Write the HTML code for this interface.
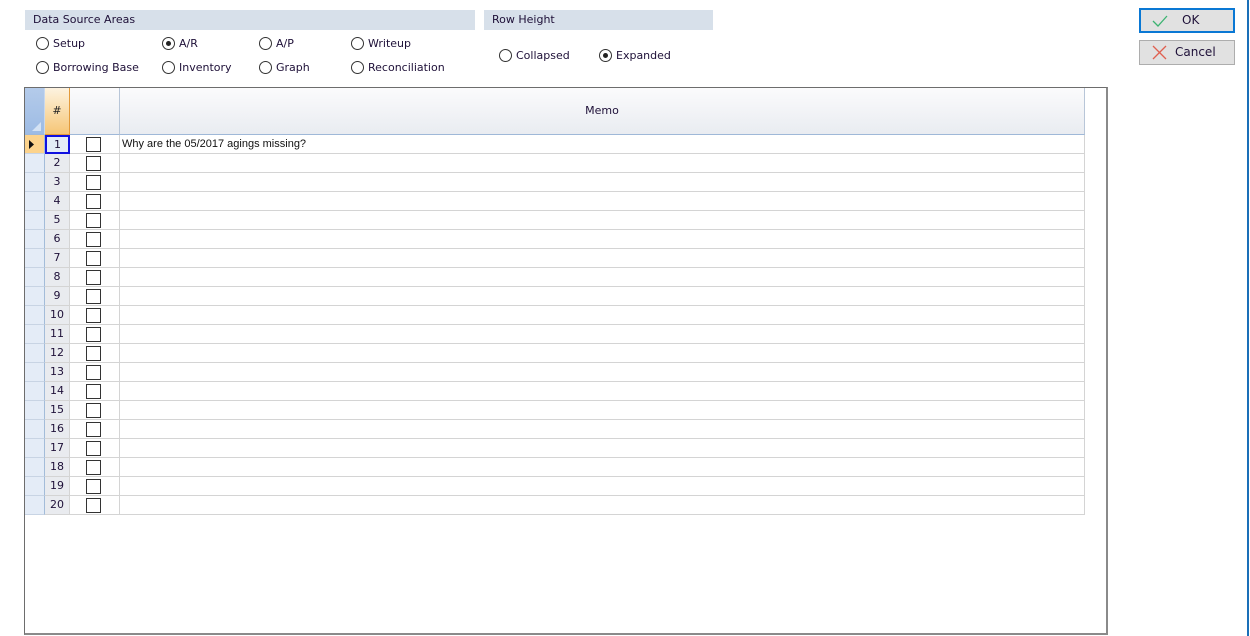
<!DOCTYPE html>
<html><head><meta charset="utf-8"><style>
*{margin:0;padding:0;box-sizing:border-box}
body{width:1250px;height:636px;background:#fff;position:relative;overflow:hidden;font-family:"DejaVu Sans","Liberation Sans",sans-serif;font-size:11px;color:#1e1038}
.a{position:absolute}
.band{position:absolute;background:#d7e0ea;height:20px;top:10px;padding-left:8px;line-height:20px}
.rb{position:absolute;width:13px;height:13px;border:1px solid #333;border-radius:50%;background:#fff}
.rb.on::after{content:"";position:absolute;left:3px;top:3px;width:5px;height:5px;border-radius:50%;background:#222}
.lbl{position:absolute;line-height:13px}
.btn{position:absolute;left:1139px;width:96px;height:25px;background:#e1e1e1;border:1px solid #adadad;font-size:12px;line-height:23px}
.grid{position:absolute;left:24px;top:87px;width:1084px;height:548px;border:1px solid #6d6d6d;border-right:2px solid #8a8a8a;border-bottom:2px solid #8a8a8a;background:#fff}
.row{position:absolute;left:0;height:19px;width:1060px}
.c{position:absolute;top:0;height:19px;border-right:1px solid #d4d4d4;border-bottom:1px solid #d4d4d4}
.s{left:0;width:20px;background:#e4ecf7;border-right:1px solid #a3bcd9;border-bottom:1px solid #c8d4e4}
.n{left:20px;width:25px;background:#e9ebef;text-align:center;line-height:18px}
.k{left:45px;width:50px}
.k::after{content:"";position:absolute;left:16px;top:2px;width:13px;height:13px;border:1px solid #333;background:#fff}
.m{left:95px;width:965px;font-family:"Liberation Sans",sans-serif;font-size:11px;line-height:18px;padding-left:2px;color:#111}
</style></head><body>
<div class="band" style="left:25px;width:450px">Data Source Areas</div>
<div class="band" style="left:484px;width:229px">Row Height</div>

<div class="rb" style="left:36px;top:37px"></div><div class="lbl" style="left:53px;top:37px">Setup</div>
<div class="rb on" style="left:162px;top:37px"></div><div class="lbl" style="left:179px;top:37px">A/R</div>
<div class="rb" style="left:259px;top:37px"></div><div class="lbl" style="left:276px;top:37px">A/P</div>
<div class="rb" style="left:351px;top:37px"></div><div class="lbl" style="left:368px;top:37px">Writeup</div>
<div class="rb" style="left:36px;top:61px"></div><div class="lbl" style="left:53px;top:61px">Borrowing Base</div>
<div class="rb" style="left:162px;top:61px"></div><div class="lbl" style="left:179px;top:61px">Inventory</div>
<div class="rb" style="left:259px;top:61px"></div><div class="lbl" style="left:276px;top:61px">Graph</div>
<div class="rb" style="left:351px;top:61px"></div><div class="lbl" style="left:368px;top:61px">Reconciliation</div>
<div class="rb" style="left:499px;top:49px"></div><div class="lbl" style="left:516px;top:49px">Collapsed</div>
<div class="rb on" style="left:599px;top:49px"></div><div class="lbl" style="left:616px;top:49px">Expanded</div>

<div class="btn" style="top:8px;border:2px solid #0a78d4;line-height:21px">
<svg class="a" style="left:11px;top:5px" width="16" height="12"><path d="M1 6 L6 11 L15 1" stroke="#3cb371" stroke-width="1.3" fill="none"/></svg>
<span class="a" style="left:41px;top:0">OK</span></div>
<div class="btn" style="top:40px">
<svg class="a" style="left:12px;top:4px" width="15" height="15"><path d="M1 1 L14 14 M14 1 L1 14" stroke="#e06050" stroke-width="1.3"/></svg>
<span class="a" style="left:35px;top:0">Cancel</span></div>

<div class="a" style="left:1247px;top:0;width:2px;height:636px;background:#1a6fb8"></div>

<div class="grid">
 <div class="a" style="left:0;top:0;width:20px;height:47px;background:linear-gradient(#b4cbea,#9dbbe4);border-right:1px solid #c8d8ee;border-bottom:1px solid #9fb8d8"><div class="a" style="right:3px;bottom:3px;width:0;height:0;border-left:9px solid transparent;border-bottom:9px solid #d4e2f4"></div></div>
 <div class="a" style="left:20px;top:0;width:25px;height:47px;background:linear-gradient(#fdf3e0,#f6c676);border-right:1px solid #e39a3a;border-bottom:1px solid #e39a3a;text-align:center;line-height:46px;color:#222">#</div>
 <div class="a" style="left:45px;top:0;width:50px;height:47px;background:linear-gradient(#fbfbfc,#e9ecf1);border-right:1px solid #b8c6d8;border-bottom:1px solid #9fb8d8"></div>
 <div class="a" style="left:95px;top:0;width:965px;height:47px;background:linear-gradient(#fbfbfc,#e9ecf1);border-right:1px solid #b8c6d8;border-bottom:1px solid #9fb8d8;text-align:center;line-height:46px">Memo</div>

 <div class="row" style="top:47px"><div class="c s" style="background:#fcd38c"><svg class="a" style="left:4px;top:5px" width="5" height="9"><path d="M0 0 L5 4.5 L0 9Z" fill="#111"/></svg></div><div class="c n" style="border:2px solid #1010e0;background:#e4ecf7;line-height:15px">1</div><div class="c k"></div><div class="c m">Why are the 05/2017 agings missing?</div></div>
 <div class="row" style="top:66px"><div class="c s"></div><div class="c n">2</div><div class="c k"></div><div class="c m"></div></div>
 <div class="row" style="top:85px"><div class="c s"></div><div class="c n">3</div><div class="c k"></div><div class="c m"></div></div>
 <div class="row" style="top:104px"><div class="c s"></div><div class="c n">4</div><div class="c k"></div><div class="c m"></div></div>
 <div class="row" style="top:123px"><div class="c s"></div><div class="c n">5</div><div class="c k"></div><div class="c m"></div></div>
 <div class="row" style="top:142px"><div class="c s"></div><div class="c n">6</div><div class="c k"></div><div class="c m"></div></div>
 <div class="row" style="top:161px"><div class="c s"></div><div class="c n">7</div><div class="c k"></div><div class="c m"></div></div>
 <div class="row" style="top:180px"><div class="c s"></div><div class="c n">8</div><div class="c k"></div><div class="c m"></div></div>
 <div class="row" style="top:199px"><div class="c s"></div><div class="c n">9</div><div class="c k"></div><div class="c m"></div></div>
 <div class="row" style="top:218px"><div class="c s"></div><div class="c n">10</div><div class="c k"></div><div class="c m"></div></div>
 <div class="row" style="top:237px"><div class="c s"></div><div class="c n">11</div><div class="c k"></div><div class="c m"></div></div>
 <div class="row" style="top:256px"><div class="c s"></div><div class="c n">12</div><div class="c k"></div><div class="c m"></div></div>
 <div class="row" style="top:275px"><div class="c s"></div><div class="c n">13</div><div class="c k"></div><div class="c m"></div></div>
 <div class="row" style="top:294px"><div class="c s"></div><div class="c n">14</div><div class="c k"></div><div class="c m"></div></div>
 <div class="row" style="top:313px"><div class="c s"></div><div class="c n">15</div><div class="c k"></div><div class="c m"></div></div>
 <div class="row" style="top:332px"><div class="c s"></div><div class="c n">16</div><div class="c k"></div><div class="c m"></div></div>
 <div class="row" style="top:351px"><div class="c s"></div><div class="c n">17</div><div class="c k"></div><div class="c m"></div></div>
 <div class="row" style="top:370px"><div class="c s"></div><div class="c n">18</div><div class="c k"></div><div class="c m"></div></div>
 <div class="row" style="top:389px"><div class="c s"></div><div class="c n">19</div><div class="c k"></div><div class="c m"></div></div>
 <div class="row" style="top:408px"><div class="c s"></div><div class="c n">20</div><div class="c k"></div><div class="c m"></div></div>
</div>
</body></html>
